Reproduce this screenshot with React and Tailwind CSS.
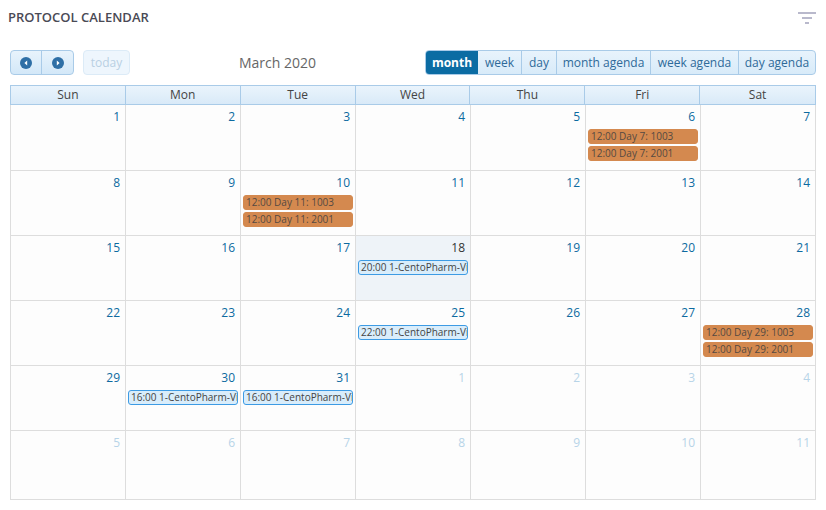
import React from "react";

const font = { fontFamily: '"Open Sans", "Liberation Sans", sans-serif' };

const days = ["Sun", "Mon", "Tue", "Wed", "Thu", "Fri", "Sat"];

// March 2020 starts on Sunday
const weeks = [
  [1, 2, 3, 4, 5, 6, 7],
  [8, 9, 10, 11, 12, 13, 14],
  [15, 16, 17, 18, 19, 20, 21],
  [22, 23, 24, 25, 26, 27, 28],
  [29, 30, 31, 1, 2, 3, 4],
  [5, 6, 7, 8, 9, 10, 11],
];

const events = {
  6: [
    { t: "12:00 Day 7: 1003", kind: "orange" },
    { t: "12:00 Day 7: 2001", kind: "orange" },
  ],
  10: [
    { t: "12:00 Day 11: 1003", kind: "orange" },
    { t: "12:00 Day 11: 2001", kind: "orange" },
  ],
  18: [{ t: "20:00 1-CentoPharm-Visit", kind: "blue" }],
  25: [{ t: "22:00 1-CentoPharm-Visit", kind: "blue" }],
  28: [
    { t: "12:00 Day 29: 1003", kind: "orange" },
    { t: "12:00 Day 29: 2001", kind: "orange" },
  ],
  30: [{ t: "16:00 1-CentoPharm-Visit", kind: "blue" }],
  31: [{ t: "16:00 1-CentoPharm-Visit", kind: "blue" }],
};

const views = [
  { label: "month", w: "w-[52px]" },
  { label: "week", w: "w-[44px]" },
  { label: "day", w: "w-[35px]" },
  { label: "month agenda", w: "w-[94px]" },
  { label: "week agenda", w: "w-[88px]" },
  { label: "day agenda", w: "w-[76px]" },
];

function Event({ t, kind }) {
  const cls =
    kind === "orange"
      ? "bg-[#d4894f] border-[#d4894f] text-[#554a42] rounded-[3px]"
      : "bg-[#d9edfb] border-[#3d9be4] text-[#444] rounded-[3px]";
  return (
    <div
      className={`mx-[2px] mb-[2px] h-[15px] border px-[2px] text-[10px] leading-[13px] whitespace-nowrap overflow-hidden ${cls}`}
    >
      {t}
    </div>
  );
}

function NavIcon({ dir }) {
  return (
    <svg width="12" height="12" viewBox="0 0 12 12">
      <circle cx="6" cy="6" r="6" fill="#2e6fa6" />
      {dir === "left" ? (
        <path d="M7.2 3.4 L4.4 6 L7.2 8.6 Z" fill="#fff" />
      ) : (
        <path d="M4.8 3.4 L7.6 6 L4.8 8.6 Z" fill="#fff" />
      )}
    </svg>
  );
}

export default function App() {
  return (
    <div className="w-[826px] h-[510px] bg-white overflow-hidden" style={font}>
      {/* Header */}
      <div className="flex items-center justify-between pl-[8px] pr-[10px] h-[36px]">
        <h1 className="text-[13px] font-semibold text-[#4a4a55]">PROTOCOL CALENDAR</h1>
        <svg width="18" height="14" viewBox="0 0 18 14">
          <rect x="0" y="1" width="18" height="2" fill="#b9b9cc" />
          <rect x="4" y="6" width="10" height="2" fill="#b9b9cc" />
          <rect x="7" y="11" width="4" height="2" fill="#b9b9cc" />
        </svg>
      </div>

      {/* Toolbar */}
      <div className="mx-[10px] mt-[14px] flex items-center h-[25px]">
        <div className="flex h-[25px] rounded-[4px] border border-[#a9cbe8] bg-gradient-to-b from-[#e8f3fc] to-[#d3e8f8] overflow-hidden">
          <button className="w-[31px] flex items-center justify-center border-r border-[#a9cbe8]">
            <NavIcon dir="left" />
          </button>
          <button className="w-[31px] flex items-center justify-center">
            <NavIcon dir="right" />
          </button>
        </div>
        <button className="ml-[9px] h-[25px] w-[47px] rounded-[4px] border border-[#dcebf7] bg-[#eef6fd] text-[12px] text-[#b9d0e3]">
          today
        </button>
        <div className="flex-1 text-center text-[14px] text-[#666]">March 2020</div>
        <div className="flex h-[25px] rounded-[4px] border border-[#a9cbe8] bg-gradient-to-b from-[#e8f3fc] to-[#d8ebf9] overflow-hidden text-[12px] text-[#2e6a99]">
          {views.map((v, i) => (
            <button
              key={v.label}
              className={`${v.w} whitespace-nowrap ${
                i === 0
                  ? "bg-[#0b6ca3] text-white font-bold"
                  : i < 5
                  ? "border-r border-[#a9cbe8]"
                  : ""
              }`}
            >
              {v.label}
            </button>
          ))}
        </div>
      </div>

      {/* Calendar */}
      <div className="mx-[10px] mt-[10px] w-[806px]">
        <div className="grid grid-cols-7 border border-[#a9cbe8] bg-gradient-to-b from-[#eaf4fc] to-[#d9eaf8] h-[20px]">
          {days.map((d, i) => (
            <div
              key={d}
              className={`text-center text-[12px] leading-[18px] text-[#444] ${i < 6 ? "border-r border-[#a9cbe8]" : ""}`}
            >
              {d}
            </div>
          ))}
        </div>
        <div className="border-l border-[#ddd]">
          {weeks.map((w, wi) => (
            <div
              key={wi}
              className={`grid grid-cols-7 border-b border-[#ddd] ${wi === 5 ? "h-[69px]" : wi === 0 ? "h-[66px]" : "h-[65px]"}`}
            >
              {w.map((n, di) => {
                const other = (wi === 4 && n < 10) || wi === 5;
                const today = wi === 2 && n === 18;
                const ev = other ? null : events[n];
                return (
                  <div
                    key={di}
                    className={`border-r border-[#ddd] ${today ? "bg-[#eef3f8]" : "bg-[#fdfdfd]"}`}
                  >
                    <div
                      className={`text-right pr-[5px] pt-[4px] text-[12px] leading-[16px] mb-[4px] ${
                        other ? "text-[#b7d4e8]" : today ? "text-[#333]" : "text-[#0c6aa0]"
                      }`}
                    >
                      {n}
                    </div>
                    {ev && ev.map((e, k) => <Event key={k} {...e} />)}
                  </div>
                );
              })}
            </div>
          ))}
        </div>
      </div>
    </div>
  );
}
